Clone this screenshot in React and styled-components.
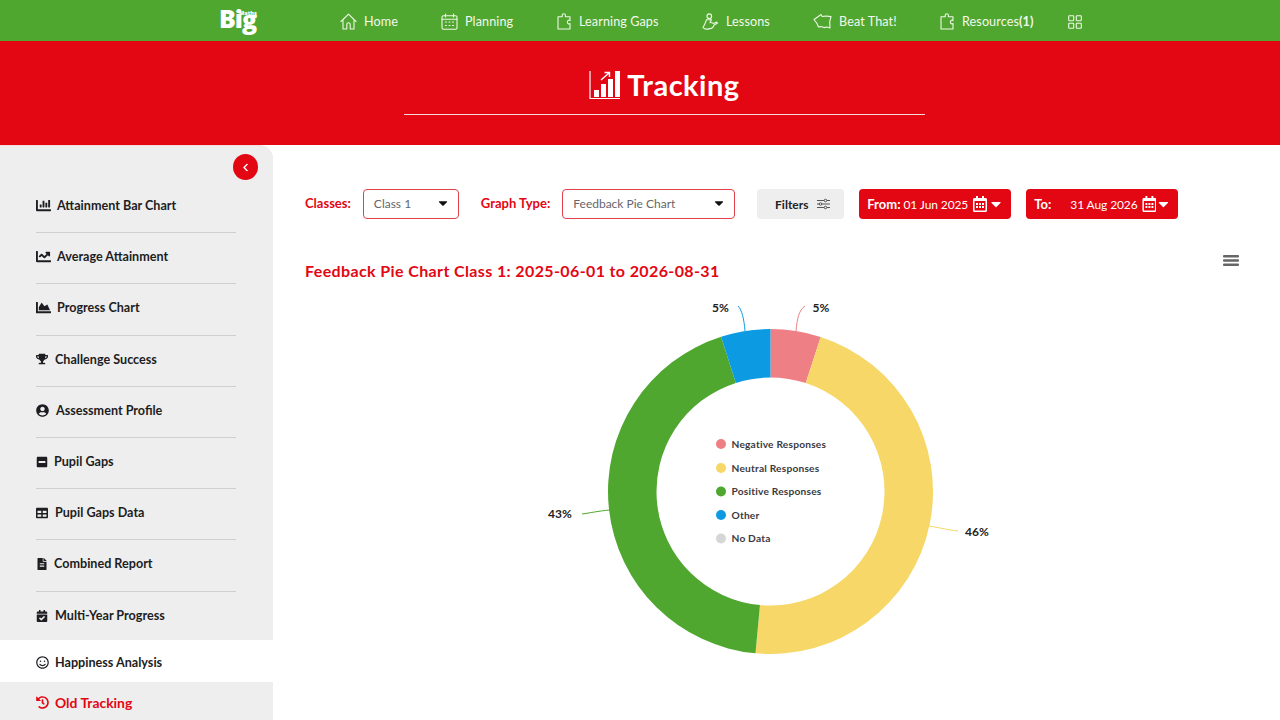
import React from "react";
import styled, { createGlobalStyle } from "styled-components";
import {
  FaChartBar,
  FaChartLine,
  FaChartArea,
  FaTrophy,
  FaUserCircle,
  FaMinusSquare,
  FaTable,
  FaFileAlt,
  FaCalendarCheck,
  FaRegSmile,
  FaHistory,
  FaChevronLeft,
  FaCaretDown,
  FaRegCalendarAlt,
} from "react-icons/fa";

const RED = "#e30613";
const GREEN = "#4fa72f";

const GlobalStyle = createGlobalStyle`
  html, body {
    margin: 0;
    height: 720px;
    overflow: hidden;
    background: #fff;
    font-family: "Lato", "Open Sans", sans-serif;
  }
  * { box-sizing: border-box; }
`;

const Page = styled.div`
  width: 1280px;
  height: 720px;
  display: flex;
  flex-direction: column;
  overflow: hidden;
`;

const TopBar = styled.header`
  height: 41px;
  flex: none;
  background: ${GREEN};
  display: flex;
  align-items: center;
  padding-left: 219px;
`;

const LogoMark = styled.svg`
  display: block;
  flex: none;
  margin-right: 81px;
  text {
    fill: #fff;
    font-family: "Open Sans", sans-serif;
    font-weight: 800;
  }
`;

const Nav = styled.nav`
  display: flex;
  align-items: center;
  padding-top: 2px;
`;

const NavItem = styled.a`
  display: flex;
  align-items: center;
  gap: 7px;
  width: ${(p) => p.$w}px;
  color: #f2f8ee;
  font-size: 12.6px;
  letter-spacing: 0.1px;
  white-space: nowrap;
  b {
    font-weight: 700;
  }
  svg {
    flex: none;
    stroke: #eef7e8;
    fill: none;
    stroke-width: 1.1;
    stroke-linecap: round;
    stroke-linejoin: round;
  }
`;

const Banner = styled.section`
  height: 104px;
  flex: none;
  background: ${RED};
  display: flex;
  flex-direction: column;
  align-items: center;
  padding: 25px 0 0 49px;
`;

const BannerTitle = styled.h1`
  margin: 0;
  height: 37px;
  display: flex;
  align-items: center;
  gap: 6px;
  color: #fff;
  font-size: 29px;
  font-weight: 700;
  letter-spacing: 0.5px;
`;

const BannerRule = styled.div`
  width: 521px;
  height: 1px;
  margin-top: 11px;
  background: #fbd9d9;
`;

const Body = styled.div`
  flex: 1;
  display: flex;
  min-height: 0;
`;

const Sidebar = styled.aside`
  width: 273px;
  flex: none;
  background: #eeeeee;
  border-top-right-radius: 14px;
  padding-top: 36px;
  position: relative;
  border-top: 1px solid #f7dede;
`;

const Collapse = styled.button`
  position: absolute;
  top: 8px;
  left: 233px;
  width: 25px;
  height: 26px;
  border: none;
  padding: 0;
  border-radius: 50%;
  background: ${RED};
  color: #fff;
  display: flex;
  align-items: center;
  justify-content: center;
  font-size: 9px;
`;

const SideList = styled.div`
  display: flex;
  flex-direction: column;
`;

const SideRow = styled.a`
  height: 51.2px;
  margin-left: 36px;
  width: 200px;
  padding-bottom: 3px;
  display: flex;
  align-items: center;
  gap: ${(p) => p.$gap || 6}px;
  border-bottom: 1px solid #cfcfcf;
  color: #1d1d22;
  font-size: 12.6px;
  font-weight: 700;
  white-space: nowrap;
  svg {
    flex: none;
    font-size: ${(p) => p.$icon || 12}px;
  }
  &:last-child {
    border-bottom: none;
    height: 48px;
    padding-bottom: 0;
  }
`;

const SideTab = styled.a`
  height: 42px;
  padding-left: 36px;
  padding-top: ${(p) => (p.$active ? 3 : 0)}px;
  display: flex;
  align-items: center;
  gap: 6px;
  background: ${(p) => (p.$active ? "#fff" : "transparent")};
  color: ${(p) => (p.$red ? RED : "#1d1d22")};
  font-size: ${(p) => (p.$red ? 13.9 : 12.6)}px;
  font-weight: 700;
  svg {
    flex: none;
    font-size: 13px;
  }
`;

const Main = styled.main`
  flex: 1;
  min-width: 0;
  padding: 44px 40px 0 32px;
`;

const Toolbar = styled.div`
  display: flex;
  align-items: center;
  height: 30px;
`;

const FieldLabel = styled.label`
  color: ${RED};
  font-size: 13px;
  font-weight: 700;
  margin-right: ${(p) => p.$gap}px;
  padding-bottom: 2px;
  white-space: nowrap;
`;

const Select = styled.div`
  width: ${(p) => p.$w}px;
  height: 30px;
  margin-right: ${(p) => p.$gap}px;
  padding: 0 8px 2px 10px;
  display: flex;
  align-items: center;
  justify-content: space-between;
  border: 1px solid #e2414c;
  border-radius: 4px;
  color: #66666b;
  font-size: 12px;
  svg {
    color: #111;
    font-size: 14px;
  }
`;

const FilterButton = styled.button`
  width: 87px;
  height: 30px;
  margin-right: 15px;
  padding: 0 0 0 4px;
  border: none;
  border-radius: 4px;
  background: #eeeeee;
  color: #222;
  font-family: inherit;
  font-size: 12px;
  font-weight: 700;
  display: flex;
  align-items: center;
  justify-content: center;
  gap: 9px;
`;

const DateButton = styled.div`
  width: 152px;
  height: 30px;
  margin-right: ${(p) => p.$gap || 0}px;
  padding: 0 7px 0 8px;
  border-radius: 4px;
  background: ${RED};
  color: #fff;
  display: flex;
  align-items: center;
  font-size: 12px;
  letter-spacing: -0.1px;
  white-space: nowrap;
  b {
    font-weight: 700;
    font-size: 13px;
    letter-spacing: 0;
    margin-right: 3px;
    min-width: ${(p) => p.$labelW || 0}px;
  }
  span {
    margin-right: 4px;
  }
  svg:first-of-type {
    font-size: 16px;
  }
  svg:last-of-type {
    font-size: 16px;
    margin-left: auto;
  }
`;

const ChartHead = styled.div`
  display: flex;
  align-items: center;
  justify-content: space-between;
  margin-top: 40px;
  height: 22px;
`;

const ChartTitle = styled.h2`
  margin: 0;
  color: ${RED};
  font-size: 16px;
  font-weight: 700;
  letter-spacing: 0.38px;
`;

const MenuBars = styled.svg`
  display: block;
  margin: 0 1px 19px 0;
  fill: #666;
`;

const ChartSvg = styled.svg`
  display: block;
  margin-top: 9px;
  text {
    font-family: "Lato", sans-serif;
  }
`;

const CX = 770.5;
const CY = 491.5;
const R1 = 162.5;
const R0 = 114;

const polar = (r, deg) => {
  const a = (deg * Math.PI) / 180;
  return [CX + r * Math.sin(a), CY - r * Math.cos(a)];
};

const ringPath = (from, to) => {
  const [x1, y1] = polar(R1, from);
  const [x2, y2] = polar(R1, to);
  const [x3, y3] = polar(R0, to);
  const [x4, y4] = polar(R0, from);
  const large = to - from > 180 ? 1 : 0;
  return `M${x1} ${y1}A${R1} ${R1} 0 ${large} 1 ${x2} ${y2}L${x3} ${y3}A${R0} ${R0} 0 ${large} 0 ${x4} ${y4}Z`;
};

const slices = [
  { color: "#ee7f84", from: 0, to: 18 },
  { color: "#f6d767", from: 18, to: 185.3 },
  { color: "#4fa72f", from: 185.3, to: 342.3 },
  { color: "#0c9ae2", from: 342.3, to: 360 },
];

const legend = [
  ["Negative Responses", "#ee7f84", 444],
  ["Neutral Responses", "#f6d767", 468],
  ["Positive Responses", "#4fa72f", 491.5],
  ["Other", "#0c9ae2", 515],
  ["No Data", "#d6d6d6", 538.5],
];

function HomeIcon() {
  return (
    <svg width="17" height="17" viewBox="0 0 17 17">
      <path d="M1 8.5 8.5 1.2 16 8.5" />
      <path d="M3 7.5V16h3.8v-4.5a1.7 1.7 0 0 1 3.4 0V16H14V7.5" />
    </svg>
  );
}

function PlanIcon() {
  return (
    <svg width="17" height="17" viewBox="0 0 17 17">
      <rect x="1" y="2.8" width="15" height="13.4" rx="1.5" />
      <path d="M1 6.3h15M4.5 1v3M12.5 1v3M4.5 9h1M8 9h1M11.5 9h1M4.5 12.5h1M8 12.5h1M11.5 12.5h1" />
    </svg>
  );
}

function PuzzleIcon() {
  return (
    <svg width="15" height="17" viewBox="0 0 15 17">
      <path d="M1 3.8h4.2V2.3a1.6 1.6 0 0 1 3.2 0v1.5H13v3.8a1.6 1.6 0 0 0-2.6 1.6 1.6 1.6 0 0 0 2.6 1.3V16H1Z" />
    </svg>
  );
}

function LessonIcon() {
  return (
    <svg width="17" height="17" viewBox="0 0 17 17">
      <circle cx="7.3" cy="3.2" r="2.3" />
      <path d="M4.5 6.7 2.8 11 1 14.5c1 1.5 3 1.8 5 1.6l4-1c1-.7 1.6-1.6 1.8-2.8l3.7-2.3-.7-1-3.5 1.4c-1.2-.8-2.4-1-3.3-.8L9.5 6.7Z" />
    </svg>
  );
}

function BeatIcon() {
  return (
    <svg width="19" height="17" viewBox="0 0 19 17">
      <path d="M1 6.5 5 3.7l3-2.2 1.2 2L13 3l5 .6-1.3 5 .3 6.4-3-1-3 .6-3-1-2.5.4L4 10.5Z" />
    </svg>
  );
}

function GridIcon() {
  return (
    <svg width="14" height="14" viewBox="0 0 14 14">
      <rect x="0.7" y="0.7" width="5" height="5" rx="0.6" />
      <rect x="8.3" y="0.7" width="5" height="5" rx="0.6" />
      <rect x="0.7" y="8.3" width="5" height="5" rx="0.6" />
      <rect x="8.3" y="8.3" width="5" height="5" rx="0.6" />
    </svg>
  );
}

function TrackingIcon() {
  return (
    <svg width="32" height="30" viewBox="0 0 32 30" fill="#fff">
      <path d="M1 1v27.5h30" fill="none" stroke="#fff" strokeWidth="1.2" />
      <rect x="5" y="20" width="5" height="7" />
      <rect x="12" y="14" width="5" height="13" />
      <rect x="19" y="9" width="5" height="18" />
      <rect x="26" y="1" width="5" height="26" />
      <path d="M12 10 20 3M15.5 2.5H20.5V7" fill="none" stroke="#fff" strokeWidth="1.4" />
    </svg>
  );
}

function SlidersIcon() {
  return (
    <svg width="13" height="12" viewBox="0 0 13 12" fill="none" stroke="#555" strokeWidth="1">
      <path d="M0 2.5h13M0 6h13M0 9.5h13" />
      <circle cx="8.5" cy="2.5" r="1.3" fill="#eee" />
      <circle cx="3.5" cy="6" r="1.3" fill="#eee" />
      <circle cx="8.5" cy="9.5" r="1.3" fill="#eee" />
    </svg>
  );
}

export default function App() {
  return (
    <Page>
      <GlobalStyle />
      <TopBar>
        <LogoMark width="40" height="41" viewBox="0 0 40 41">
          <text x="0" y="28" fontSize="25" letterSpacing="-1">
            Bi<tspan dy="1">g</tspan>
          </text>
          <text x="20" y="14.5" fontSize="5.5">Maths</text>
        </LogoMark>
        <Nav>
          <NavItem $w={101}><HomeIcon /><span>Home</span></NavItem>
          <NavItem $w={116}><PlanIcon /><span>Planning</span></NavItem>
          <NavItem $w={145}><PuzzleIcon /><span>Learning Gaps</span></NavItem>
          <NavItem $w={111}><LessonIcon /><span>Lessons</span></NavItem>
          <NavItem $w={127}><BeatIcon /><span>Beat That!</span></NavItem>
          <NavItem $w={128}><PuzzleIcon /><span>Resources<b>(1)</b></span></NavItem>
          <NavItem $w={20}><GridIcon /></NavItem>
        </Nav>
      </TopBar>

      <Banner>
        <BannerTitle>
          <TrackingIcon />
          Tracking
        </BannerTitle>
        <BannerRule />
      </Banner>

      <Body>
        <Sidebar>
          <Collapse aria-label="Collapse"><FaChevronLeft /></Collapse>
          <SideList>
            <SideRow $icon={15}><FaChartBar />Attainment Bar Chart</SideRow>
            <SideRow $icon={15}><FaChartLine />Average Attainment</SideRow>
            <SideRow $icon={15}><FaChartArea />Progress Chart</SideRow>
            <SideRow $gap={7}><FaTrophy />Challenge Success</SideRow>
            <SideRow $gap={7} $icon={13}><FaUserCircle />Assessment Profile</SideRow>
            <SideRow $gap={6}><FaMinusSquare />Pupil Gaps</SideRow>
            <SideRow $gap={7}><FaTable />Pupil Gaps Data</SideRow>
            <SideRow $gap={6}><FaFileAlt />Combined Report</SideRow>
            <SideRow $gap={7}><FaCalendarCheck />Multi-Year Progress</SideRow>
          </SideList>
          <SideTab $active><FaRegSmile />Happiness Analysis</SideTab>
          <SideTab $red><FaHistory />Old Tracking</SideTab>
        </Sidebar>

        <Main>
          <Toolbar>
            <FieldLabel $gap={12}>Classes:</FieldLabel>
            <Select $w={96} $gap={22}>Class 1 <FaCaretDown /></Select>
            <FieldLabel $gap={12}>Graph Type:</FieldLabel>
            <Select $w={173} $gap={22}>Feedback Pie Chart <FaCaretDown /></Select>
            <FilterButton>Filters <SlidersIcon /></FilterButton>
            <DateButton $gap={15}>
              <b>From:</b><span>01 Jun 2025</span><FaRegCalendarAlt /><FaCaretDown />
            </DateButton>
            <DateButton $labelW={33}>
              <b>To:</b><span>31 Aug 2026</span><FaRegCalendarAlt /><FaCaretDown />
            </DateButton>
          </Toolbar>

          <ChartHead>
            <ChartTitle>Feedback Pie Chart Class 1: 2025-06-01 to 2026-08-31</ChartTitle>
            <MenuBars width="16" height="11" viewBox="0 0 16 11">
              <rect width="16" height="2.6" rx="1" />
              <rect y="4.2" width="16" height="2.6" rx="1" />
              <rect y="8.4" width="16" height="2.6" rx="1" />
            </MenuBars>
          </ChartHead>

          <ChartSvg width="935" height="430" viewBox="305 290 935 430">
            {slices.map((s) => (
              <path key={s.color} d={ringPath(s.from, s.to)} fill={s.color} />
            ))}
            <path d="M796 331c1-12 3-21 9-25" fill="none" stroke="#ee7f84" />
            <path d="M745 331c-1-12-3-21-7-25" fill="none" stroke="#0c9ae2" />
            <path d="M929 526c12 2 20 4 29 5" fill="none" stroke="#f6d767" />
            <path d="M610 510c-12 1-20 3-28 4" fill="none" stroke="#4fa72f" />
            <g fontSize="12" fontWeight="700" fill="#222">
              <text x="712" y="312">5%</text>
              <text x="812.5" y="312">5%</text>
              <text x="548" y="518">43%</text>
              <text x="965" y="536">46%</text>
            </g>
            {legend.map(([label, color, y]) => (
              <g key={label}>
                <circle cx="721" cy={y} r="5" fill={color} />
                <text x="731.5" y={y + 3.8} fontSize="10.2" fontWeight="700" letterSpacing="0.2" fill="#3a3a40">
                  {label}
                </text>
              </g>
            ))}
          </ChartSvg>
        </Main>
      </Body>
    </Page>
  );
}
